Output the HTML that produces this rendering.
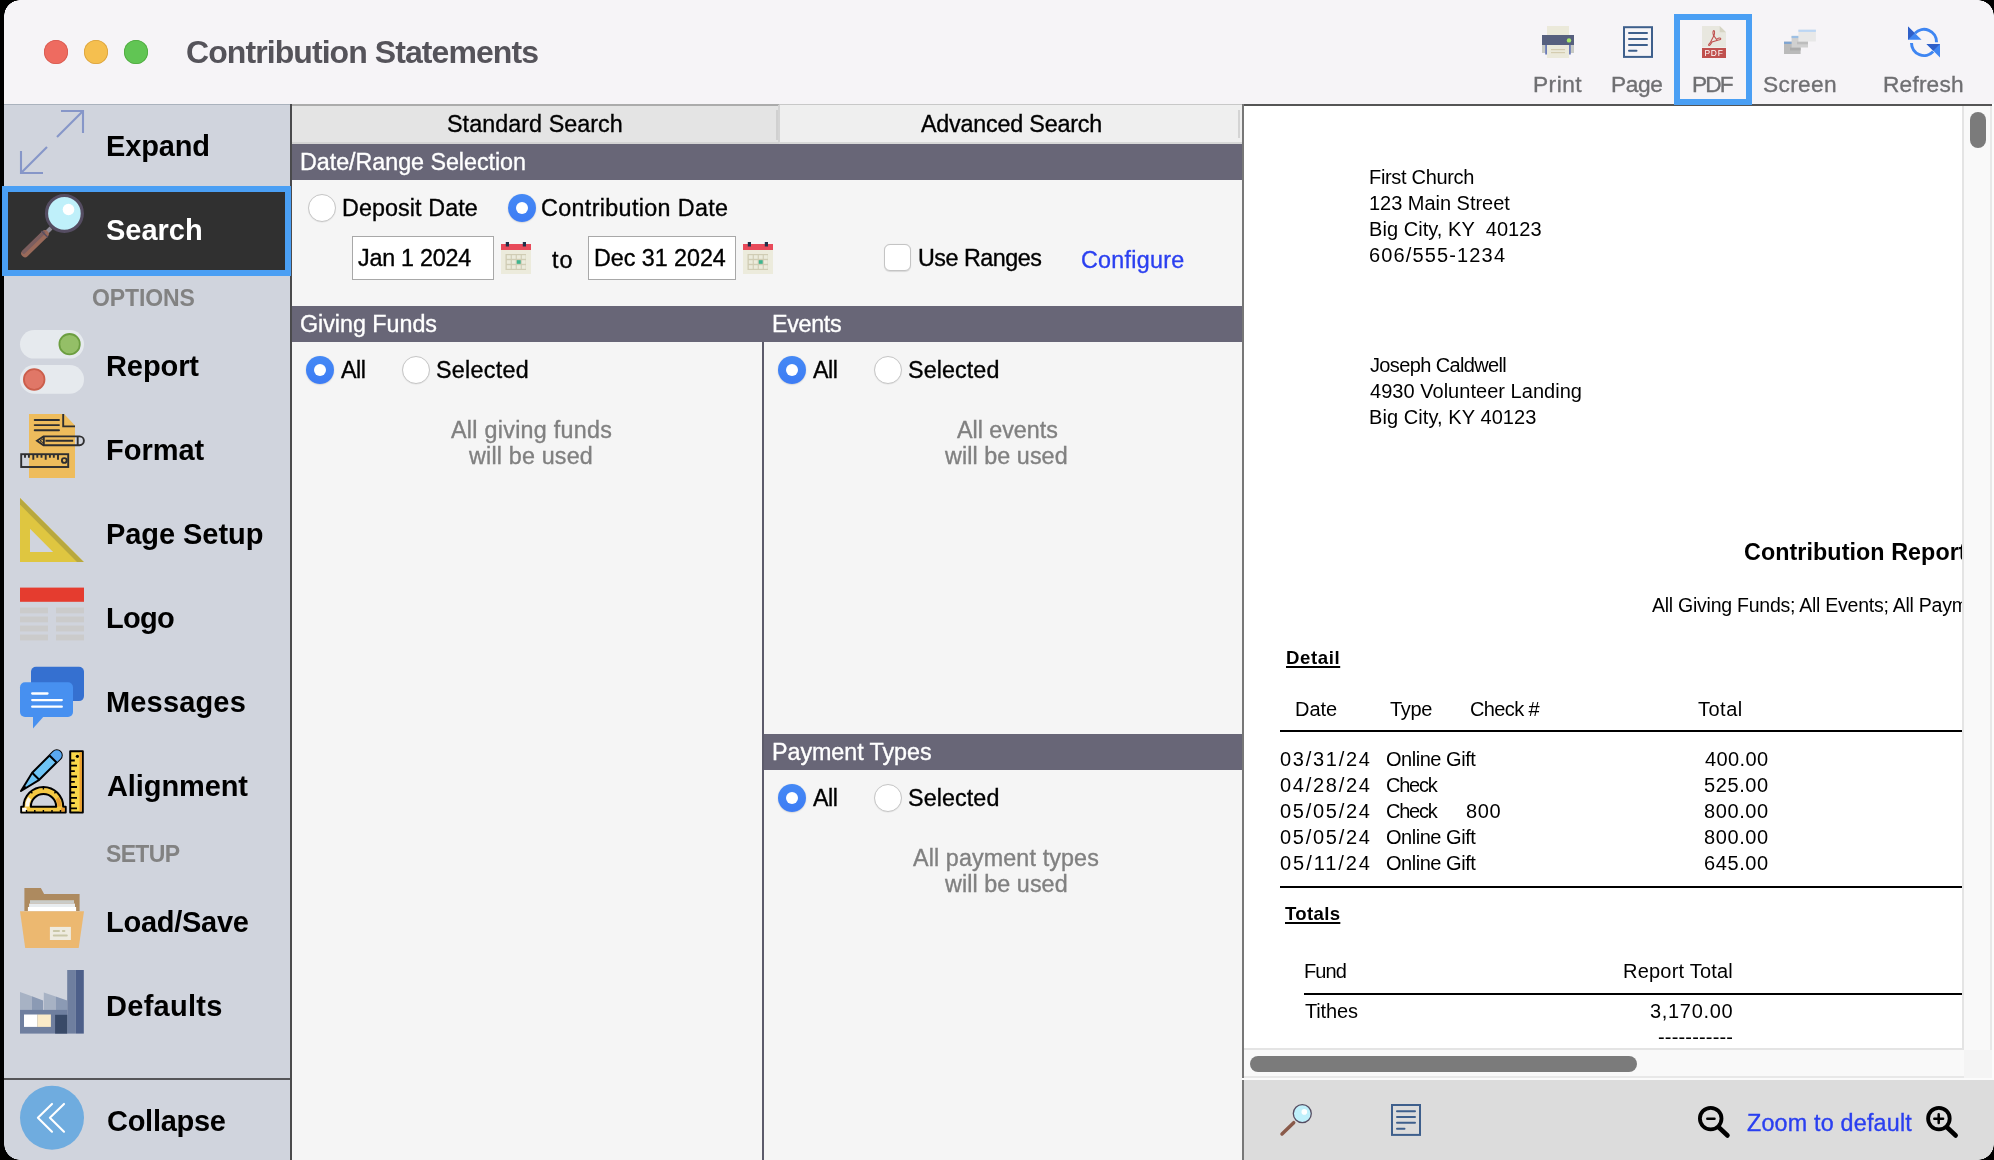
<!DOCTYPE html>
<html><head><meta charset="utf-8">
<style>
html,body{margin:0;padding:0;}
body{width:1994px;height:1160px;background:#000;overflow:hidden;position:relative;font-family:"Liberation Sans",sans-serif;}
.win{position:absolute;left:0;top:0;width:1994px;height:1160px;background:#f6f4f7;}
.cor{position:absolute;width:16px;height:16px;z-index:10;}
.a{position:absolute;}
.t{position:absolute;z-index:3;white-space:pre;line-height:1;will-change:transform;font-family:"Liberation Sans",sans-serif;}
svg{position:absolute;overflow:visible;}
.radio{position:absolute;width:28px;height:28px;border-radius:50%;box-sizing:border-box;}
.ron{background:linear-gradient(#4589f5,#3d7cf4);box-shadow:0 0.5px 1.5px rgba(0,0,0,.2);}
.ron::after{content:"";position:absolute;left:7.9px;top:7.9px;width:12.2px;height:12.2px;border-radius:50%;background:#fff;}
.roff{background:#fff;border:1px solid #c6c6c6;box-shadow:0 0.5px 1px rgba(0,0,0,.08);}
</style></head><body>
<div class="win">
<!-- title bar -->
<div class="a" style="left:0;top:0;width:1994px;height:104px;background:#f6f4f7"></div>
<!-- traffic lights -->
<div class="a" style="left:44px;top:40px;width:24px;height:24px;border-radius:50%;background:#ee6b60;box-shadow:inset 0 0 0 0.8px #d65a50"></div>
<div class="a" style="left:84px;top:40px;width:24px;height:24px;border-radius:50%;background:#f5bf4f;box-shadow:inset 0 0 0 0.8px #d9a23f"></div>
<div class="a" style="left:124px;top:40px;width:24px;height:24px;border-radius:50%;background:#61c554;box-shadow:inset 0 0 0 0.8px #4fa83f"></div>

<!-- sidebar -->
<div class="a" style="left:0;top:104px;width:290px;height:1056px;background:#d0d4dd"></div>
<div class="a" style="left:4px;top:104px;width:286px;height:1px;background:#aab2bd"></div>
<div class="a" style="left:290px;top:104px;width:2px;height:1056px;background:#4a4a4c"></div>
<!-- search highlight -->
<div class="a" style="left:0;top:0;width:4px;height:1160px;background:#000"></div>
<div class="a" style="left:2px;top:186px;width:289px;height:90px;background:#4a9ff4"></div>
<div class="a" style="left:8px;top:192px;width:277px;height:78px;background:#303030"></div>
<!-- collapse separator -->
<div class="a" style="left:4px;top:1078px;width:286px;height:2px;background:#555558"></div>

<!-- middle panel -->
<div class="a" style="left:292px;top:104px;width:950px;height:1056px;background:#f5f5f5"></div>
<!-- tabs -->
<div class="a" style="left:292px;top:104px;width:487px;height:40px;background:#e4e4e4;border-top:2px solid #ababab;box-sizing:border-box"></div>
<div class="a" style="left:292px;top:142px;width:487px;height:2px;background:#d4d4d4"></div>
<div class="a" style="left:776px;top:110px;width:2px;height:30px;background:#d0d0d0"></div>
<div class="a" style="left:779px;top:104px;width:463px;height:40px;background:#efefef;border-top:1px solid #c8c8c8;box-sizing:border-box"></div>
<div class="a" style="left:778px;top:105px;width:2px;height:38px;background:#d4d4d4"></div>
<div class="a" style="left:779px;top:142px;width:463px;height:2px;background:#d8d8d8"></div>
<div class="a" style="left:1238px;top:110px;width:2px;height:28px;background:#d4d4d4"></div>
<!-- headers -->
<div class="a" style="left:292px;top:144px;width:950px;height:36px;background:#686677"></div>
<div class="a" style="left:292px;top:306px;width:950px;height:36px;background:#686677"></div>
<div class="a" style="left:762px;top:342px;width:2px;height:818px;background:#5c5b6a"></div>
<div class="a" style="left:764px;top:734px;width:478px;height:36px;background:#686677"></div>

<!-- date inputs -->
<div class="a" style="left:352px;top:236px;width:142px;height:44px;background:#fff;border:1.5px solid #a8a8a8;box-sizing:border-box"></div>
<div class="a" style="left:588px;top:236px;width:148px;height:44px;background:#fff;border:1.5px solid #a8a8a8;box-sizing:border-box"></div>
<!-- checkbox -->
<div class="a" style="left:884px;top:244px;width:27px;height:27px;background:#fff;border:1px solid #c4c4c4;border-radius:6px;box-sizing:border-box;box-shadow:0 0.5px 1px rgba(0,0,0,.12)"></div>

<!-- radios -->
<div class="radio roff" style="left:308px;top:194px"></div>
<div class="radio ron" style="left:508px;top:194px"></div>
<div class="radio ron" style="left:306px;top:356px"></div>
<div class="radio roff" style="left:402px;top:356px"></div>
<div class="radio ron" style="left:778px;top:356px"></div>
<div class="radio roff" style="left:874px;top:356px"></div>
<div class="radio ron" style="left:778px;top:784px"></div>
<div class="radio roff" style="left:874px;top:784px"></div>

<!-- preview -->
<div class="a" style="left:1242px;top:104px;width:752px;height:974px;background:#fff"></div>
<div class="a" style="left:1242px;top:104px;width:750px;height:2px;background:#555"></div>
<div class="a" style="left:1242px;top:104px;width:2px;height:1056px;background:#777"></div>

<!-- report lines -->
<div class="a" style="left:1280px;top:729.5px;width:682px;height:2px;background:#000"></div>
<div class="a" style="left:1280px;top:885.5px;width:682px;height:2px;background:#000"></div>
<div class="a" style="left:1304px;top:993px;width:658px;height:2px;background:#000"></div>

<div class="t" style="left:186.20px;top:35.90px;font-size:32px;font-weight:700;color:#55535a;letter-spacing:-0.924px;">Contribution Statements</div>
<div class="t" style="left:1533.20px;top:72.80px;font-size:22.7px;font-weight:400;color:#6f6f72;letter-spacing:0.486px;-webkit-text-stroke:0.35px #6f6f72;">Print</div>
<div class="t" style="left:1611.40px;top:72.80px;font-size:22.7px;font-weight:400;color:#6f6f72;letter-spacing:-0.400px;-webkit-text-stroke:0.35px #6f6f72;">Page</div>
<div class="t" style="left:1692.30px;top:72.80px;font-size:22.7px;font-weight:400;color:#6f6f72;letter-spacing:-1.888px;-webkit-text-stroke:0.35px #6f6f72;">PDF</div>
<div class="t" style="left:1762.90px;top:72.80px;font-size:22.7px;font-weight:400;color:#6f6f72;letter-spacing:0.342px;-webkit-text-stroke:0.35px #6f6f72;">Screen</div>
<div class="t" style="left:1883.00px;top:72.80px;font-size:22.7px;font-weight:400;color:#6f6f72;letter-spacing:0.191px;-webkit-text-stroke:0.35px #6f6f72;">Refresh</div>
<div class="t" style="left:105.50px;top:131.50px;font-size:29px;font-weight:700;color:#000;letter-spacing:-0.150px;">Expand</div>
<div class="t" style="left:105.90px;top:215.50px;font-size:29px;font-weight:700;color:#fff;letter-spacing:-0.027px;">Search</div>
<div class="t" style="left:105.50px;top:351.50px;font-size:29px;font-weight:700;color:#000;letter-spacing:-0.091px;">Report</div>
<div class="t" style="left:105.50px;top:435.50px;font-size:29px;font-weight:700;color:#000;letter-spacing:-0.019px;">Format</div>
<div class="t" style="left:105.50px;top:519.50px;font-size:29px;font-weight:700;color:#000;letter-spacing:-0.060px;">Page Setup</div>
<div class="t" style="left:105.50px;top:603.50px;font-size:29px;font-weight:700;color:#000;letter-spacing:-0.753px;">Logo</div>
<div class="t" style="left:105.50px;top:687.50px;font-size:29px;font-weight:700;color:#000;letter-spacing:0.163px;">Messages</div>
<div class="t" style="left:106.50px;top:771.50px;font-size:29px;font-weight:700;color:#000;letter-spacing:-0.098px;">Alignment</div>
<div class="t" style="left:105.50px;top:907.50px;font-size:29px;font-weight:700;color:#000;letter-spacing:-0.258px;">Load/Save</div>
<div class="t" style="left:105.50px;top:991.50px;font-size:29px;font-weight:700;color:#000;letter-spacing:0.283px;">Defaults</div>
<div class="t" style="left:106.50px;top:1106.50px;font-size:29px;font-weight:700;color:#000;letter-spacing:-0.268px;">Collapse</div>
<div class="t" style="left:92.00px;top:286.55px;font-size:23px;font-weight:700;color:#828282;letter-spacing:-0.119px;">OPTIONS</div>
<div class="t" style="left:105.80px;top:842.55px;font-size:23px;font-weight:700;color:#828282;letter-spacing:-0.672px;">SETUP</div>
<div class="t" style="left:447.00px;top:112.50px;font-size:23.3px;font-weight:400;color:#000;letter-spacing:0.068px;-webkit-text-stroke:0.35px #000;">Standard Search</div>
<div class="t" style="left:921.00px;top:112.50px;font-size:23.3px;font-weight:400;color:#000;letter-spacing:-0.194px;-webkit-text-stroke:0.35px #000;">Advanced Search</div>
<div class="t" style="left:300.00px;top:150.50px;font-size:23.3px;font-weight:400;color:#fff;letter-spacing:-0.035px;-webkit-text-stroke:0.35px #fff;">Date/Range Selection</div>
<div class="t" style="left:341.60px;top:196.50px;font-size:23.3px;font-weight:400;color:#000;letter-spacing:0.101px;-webkit-text-stroke:0.35px #000;">Deposit Date</div>
<div class="t" style="left:541.00px;top:196.50px;font-size:23.3px;font-weight:400;color:#000;letter-spacing:0.355px;-webkit-text-stroke:0.35px #000;">Contribution Date</div>
<div class="t" style="left:358.00px;top:246.50px;font-size:23.3px;font-weight:400;color:#000;letter-spacing:-0.233px;-webkit-text-stroke:0.35px #000;">Jan 1 2024</div>
<div class="t" style="left:552.00px;top:248.50px;font-size:23.3px;font-weight:400;color:#000;letter-spacing:0.962px;-webkit-text-stroke:0.35px #000;">to</div>
<div class="t" style="left:594.00px;top:246.50px;font-size:23.3px;font-weight:400;color:#000;letter-spacing:-0.032px;-webkit-text-stroke:0.35px #000;">Dec 31 2024</div>
<div class="t" style="left:918.00px;top:246.50px;font-size:23.3px;font-weight:400;color:#000;letter-spacing:-0.489px;-webkit-text-stroke:0.35px #000;">Use Ranges</div>
<div class="t" style="left:1081.40px;top:248.50px;font-size:23.3px;font-weight:400;color:#2a3ff0;letter-spacing:0.273px;-webkit-text-stroke:0.35px #2a3ff0;">Configure</div>
<div class="t" style="left:299.60px;top:312.50px;font-size:23.3px;font-weight:400;color:#fff;letter-spacing:-0.024px;-webkit-text-stroke:0.35px #fff;">Giving Funds</div>
<div class="t" style="left:772.00px;top:312.50px;font-size:23.3px;font-weight:400;color:#fff;letter-spacing:-0.327px;-webkit-text-stroke:0.35px #fff;">Events</div>
<div class="t" style="left:341.00px;top:358.50px;font-size:23.3px;font-weight:400;color:#000;letter-spacing:-0.445px;-webkit-text-stroke:0.35px #000;">All</div>
<div class="t" style="left:435.70px;top:358.50px;font-size:23.3px;font-weight:400;color:#000;letter-spacing:0.275px;-webkit-text-stroke:0.35px #000;">Selected</div>
<div class="t" style="left:813.00px;top:358.50px;font-size:23.3px;font-weight:400;color:#000;letter-spacing:-0.445px;-webkit-text-stroke:0.35px #000;">All</div>
<div class="t" style="left:908.00px;top:358.50px;font-size:23.3px;font-weight:400;color:#000;letter-spacing:0.104px;-webkit-text-stroke:0.35px #000;">Selected</div>
<div class="t" style="left:450.50px;top:418.50px;font-size:23.3px;font-weight:400;color:#808080;letter-spacing:0.286px;-webkit-text-stroke:0.35px #808080;">All giving funds</div>
<div class="t" style="left:468.50px;top:444.50px;font-size:23.3px;font-weight:400;color:#808080;letter-spacing:0.188px;-webkit-text-stroke:0.35px #808080;">will be used</div>
<div class="t" style="left:956.60px;top:418.50px;font-size:23.3px;font-weight:400;color:#808080;letter-spacing:-0.024px;-webkit-text-stroke:0.35px #808080;">All events</div>
<div class="t" style="left:944.60px;top:444.50px;font-size:23.3px;font-weight:400;color:#808080;letter-spacing:0.079px;-webkit-text-stroke:0.35px #808080;">will be used</div>
<div class="t" style="left:771.60px;top:740.50px;font-size:23.3px;font-weight:400;color:#fff;letter-spacing:-0.046px;-webkit-text-stroke:0.35px #fff;">Payment Types</div>
<div class="t" style="left:813.00px;top:786.50px;font-size:23.3px;font-weight:400;color:#000;letter-spacing:-0.445px;-webkit-text-stroke:0.35px #000;">All</div>
<div class="t" style="left:908.00px;top:786.50px;font-size:23.3px;font-weight:400;color:#000;letter-spacing:0.104px;-webkit-text-stroke:0.35px #000;">Selected</div>
<div class="t" style="left:912.80px;top:846.50px;font-size:23.3px;font-weight:400;color:#808080;letter-spacing:0.120px;-webkit-text-stroke:0.35px #808080;">All payment types</div>
<div class="t" style="left:944.60px;top:872.50px;font-size:23.3px;font-weight:400;color:#808080;letter-spacing:0.079px;-webkit-text-stroke:0.35px #808080;">will be used</div>
<div class="t" style="left:1369.40px;top:167.05px;font-size:20px;font-weight:400;color:#000;letter-spacing:-0.319px;">First Church</div>
<div class="t" style="left:1369.40px;top:193.05px;font-size:20px;font-weight:400;color:#000;letter-spacing:-0.029px;">123 Main Street</div>
<div class="t" style="left:1369.40px;top:219.05px;font-size:20px;font-weight:400;color:#000;letter-spacing:0.056px;">Big City, KY  40123</div>
<div class="t" style="left:1369.40px;top:245.05px;font-size:20px;font-weight:400;color:#000;letter-spacing:1.141px;">606/555-1234</div>
<div class="t" style="left:1370.40px;top:355.05px;font-size:20px;font-weight:400;color:#000;letter-spacing:-0.631px;">Joseph Caldwell</div>
<div class="t" style="left:1370.40px;top:381.05px;font-size:20px;font-weight:400;color:#000;letter-spacing:0.033px;">4930 Volunteer Landing</div>
<div class="t" style="left:1369.40px;top:407.05px;font-size:20px;font-weight:400;color:#000;letter-spacing:0.081px;">Big City, KY 40123</div>
<div class="t" style="left:1743.70px;top:540.50px;font-size:23.3px;font-weight:700;color:#000;letter-spacing:0.073px;z-index:1;">Contribution Report</div>
<div class="t" style="left:1652.40px;top:595.50px;font-size:19.5px;font-weight:400;color:#000;letter-spacing:-0.249px;z-index:1;">All Giving Funds; All Events; All Payments</div>
<div class="t" style="left:1286.20px;top:648.50px;font-size:18.6px;font-weight:700;color:#000;letter-spacing:0.592px;text-decoration:underline;text-underline-offset:2px;text-decoration-thickness:2px;">Detail</div>
<div class="t" style="left:1295.20px;top:699.05px;font-size:20px;font-weight:400;color:#000;letter-spacing:-0.017px;">Date</div>
<div class="t" style="left:1390.40px;top:699.05px;font-size:20px;font-weight:400;color:#000;letter-spacing:-0.320px;">Type</div>
<div class="t" style="left:1469.60px;top:699.05px;font-size:20px;font-weight:400;color:#000;letter-spacing:-0.629px;">Check #</div>
<div class="t" style="left:1698.30px;top:699.05px;font-size:20px;font-weight:400;color:#000;letter-spacing:0.488px;">Total</div>
<div class="t" style="left:1279.80px;top:749.05px;font-size:20px;font-weight:400;color:#000;letter-spacing:1.734px;">03/31/24</div>
<div class="t" style="left:1385.60px;top:749.05px;font-size:20px;font-weight:400;color:#000;letter-spacing:-0.468px;">Online Gift</div>
<div class="t" style="left:1705.00px;top:749.05px;font-size:20px;font-weight:400;color:#000;letter-spacing:0.406px;">400.00</div>
<div class="t" style="left:1279.80px;top:775.05px;font-size:20px;font-weight:400;color:#000;letter-spacing:1.734px;">04/28/24</div>
<div class="t" style="left:1385.60px;top:775.05px;font-size:20px;font-weight:400;color:#000;letter-spacing:-1.226px;">Check</div>
<div class="t" style="left:1704.00px;top:775.05px;font-size:20px;font-weight:400;color:#000;letter-spacing:0.606px;">525.00</div>
<div class="t" style="left:1279.80px;top:801.05px;font-size:20px;font-weight:400;color:#000;letter-spacing:1.734px;">05/05/24</div>
<div class="t" style="left:1385.60px;top:801.05px;font-size:20px;font-weight:400;color:#000;letter-spacing:-1.226px;">Check</div>
<div class="t" style="left:1466.30px;top:801.05px;font-size:20px;font-weight:400;color:#000;letter-spacing:0.612px;">800</div>
<div class="t" style="left:1704.00px;top:801.05px;font-size:20px;font-weight:400;color:#000;letter-spacing:0.606px;">800.00</div>
<div class="t" style="left:1279.80px;top:827.05px;font-size:20px;font-weight:400;color:#000;letter-spacing:1.734px;">05/05/24</div>
<div class="t" style="left:1385.60px;top:827.05px;font-size:20px;font-weight:400;color:#000;letter-spacing:-0.468px;">Online Gift</div>
<div class="t" style="left:1704.00px;top:827.05px;font-size:20px;font-weight:400;color:#000;letter-spacing:0.606px;">800.00</div>
<div class="t" style="left:1279.80px;top:853.05px;font-size:20px;font-weight:400;color:#000;letter-spacing:1.946px;">05/11/24</div>
<div class="t" style="left:1385.60px;top:853.05px;font-size:20px;font-weight:400;color:#000;letter-spacing:-0.468px;">Online Gift</div>
<div class="t" style="left:1704.00px;top:853.05px;font-size:20px;font-weight:400;color:#000;letter-spacing:0.606px;">645.00</div>
<div class="t" style="left:1285.00px;top:904.50px;font-size:18.6px;font-weight:700;color:#000;letter-spacing:0.325px;text-decoration:underline;text-underline-offset:2px;text-decoration-thickness:2px;">Totals</div>
<div class="t" style="left:1303.50px;top:961.05px;font-size:20px;font-weight:400;color:#000;letter-spacing:-0.865px;">Fund</div>
<div class="t" style="left:1622.70px;top:961.05px;font-size:20px;font-weight:400;color:#000;letter-spacing:0.211px;">Report Total</div>
<div class="t" style="left:1304.50px;top:1001.05px;font-size:20px;font-weight:400;color:#000;letter-spacing:-0.147px;">Tithes</div>
<div class="t" style="left:1649.70px;top:1001.05px;font-size:20px;font-weight:400;color:#000;letter-spacing:0.677px;">3,170.00</div>
<div class="t" style="left:1658.20px;top:1027.05px;font-size:20px;font-weight:400;color:#000;letter-spacing:0.173px;">-----------</div>
<div class="t" style="left:1746.60px;top:1111.50px;font-size:23.3px;font-weight:400;color:#2a3ff0;letter-spacing:0.209px;-webkit-text-stroke:0.35px #2a3ff0;">Zoom to default</div>

<!-- scrollbars --><div style="position:absolute;left:0;top:0;z-index:2">
<div class="a" style="left:1962px;top:106px;width:30px;height:944px;background:#f9f9f9;border-left:2px solid #e4e4e4;border-right:2px solid #e8e8e8;box-sizing:border-box"></div>
<div class="a" style="left:1992px;top:106px;width:2px;height:974px;background:#fbfbfb"></div>
<div class="a" style="left:1969.5px;top:112px;width:16px;height:36px;border-radius:8px;background:#7b7b7b"></div>
<div class="a" style="left:1244px;top:1048px;width:720px;height:2px;background:#e4e4e4"></div>
<div class="a" style="left:1244px;top:1050px;width:720px;height:28px;background:#f9f9f9;border-bottom:2px solid #e8e8e8;box-sizing:border-box"></div>
<div class="a" style="left:1964px;top:1050px;width:28px;height:28px;background:#f4f4f4"></div>
<div class="a" style="left:1242px;top:1078px;width:752px;height:2px;background:#fbfbfb"></div>
<div class="a" style="left:1250px;top:1056px;width:387px;height:16px;border-radius:8px;background:#7b7b7b"></div>
<!-- bottom toolbar -->
<div class="a" style="left:1244px;top:1080px;width:750px;height:80px;background:#dcdcdc"></div>

</div>
<svg style="left:0;top:0;z-index:5" width="1994" height="1160" viewBox="0 0 1994 1160">
<defs>
<filter id="blur1" x="-20%" y="-20%" width="140%" height="140%"><feGaussianBlur stdDeviation="0.75"/></filter>
</defs>
<!-- ===== toolbar ===== -->
<!-- Print -->
<g>
<rect x="1547" y="26" width="22" height="10" fill="#ebe9da"/>
<rect x="1542" y="35" width="32" height="10" fill="#565f7e"/>
<circle cx="1569" cy="40.4" r="2.2" fill="#a8e86a"/>
<rect x="1542" y="45" width="32" height="8" fill="#c8cac4"/>
<rect x="1545.2" y="45" width="1.8" height="9.5" fill="#6a7ab8"/>
<rect x="1569" y="45" width="1.8" height="9.5" fill="#6a7ab8"/>
<rect x="1547" y="45" width="22" height="13" fill="#ebe9da"/>
<rect x="1551" y="49" width="14" height="1.2" fill="#d4ccb0"/>
<rect x="1551" y="52" width="14" height="1.2" fill="#d4ccb0"/>
</g>
<!-- Page -->
<g fill="none" stroke="#3e5f8c">
<rect x="1624" y="27.2" width="28" height="29.7" stroke-width="2"/>
<path d="M1629 33H1647M1629 39H1647M1629 45H1647M1629 50.8H1636.5" stroke-width="2" stroke-linecap="round"/>
</g>
<!-- PDF selection box -->
<rect x="1677" y="17" width="72" height="85" fill="none" stroke="#4a9ff4" stroke-width="6"/>
<!-- PDF icon -->
<g>
<path d="M1702 26.1H1719.7L1726 32.3V47.5H1702Z" fill="#e8e7df"/>
<path d="M1719.7 26.1V32.3H1726Z" fill="#d6d4c4"/>
<rect x="1702" y="48" width="24" height="10" fill="#c0504e"/>
<text x="1714" y="56.2" font-family="Liberation Sans" font-weight="400" font-size="8.4" fill="#fff" text-anchor="middle" letter-spacing="0.8">PDF</text>
<path d="M1713.8 30.6C1712.6 31 1713 34 1713.6 36.2L1710.5 42.3C1709.5 43.8 1708 44.5 1708.7 45.3C1709.6 46 1711 44 1712 42L1718.5 40C1720.5 39.8 1721.3 39 1720.5 38.3C1719.5 37.6 1717.5 38.7 1716.5 39.4L1714 36C1714.5 34 1714.9 30.9 1713.8 30.6Z" fill="none" stroke="#c0504e" stroke-width="1.1"/>
</g>
<!-- Screen icon -->
<g filter="url(#blur1)">
<rect x="1784" y="41.7" width="16.6" height="12.3" fill="#bababa"/>
<rect x="1784" y="41.7" width="16.6" height="2.2" fill="#7ea4d2"/>
<rect x="1790" y="47.5" width="10.6" height="3" fill="#ababab"/>
<rect x="1791.6" y="35.9" width="16.4" height="11.6" fill="#d0d0d0"/>
<rect x="1791.6" y="35.9" width="16.4" height="2.2" fill="#9cbfe4"/>
<rect x="1797" y="41.7" width="11" height="2.6" fill="#bdbdbd"/>
<rect x="1798.4" y="29.7" width="17.5" height="11.8" fill="#e8e8e8"/>
<rect x="1798.4" y="29.7" width="17.5" height="2.2" fill="#bcd6f4"/>
</g>
<!-- Refresh -->
<g>
<path d="M1915 33.2A12.5 12.5 0 0 1 1936.5 42.2" fill="none" stroke="#3f86f2" stroke-width="3"/>
<path d="M1911.5 43A12.5 12.5 0 0 0 1933.2 51.5" fill="none" stroke="#3f86f2" stroke-width="3"/>
<path d="M1908 26.6V39.8H1921.6Z" fill="#3f86f2"/>
<path d="M1908 26.6V39.8L1914.8 33.2Z" fill="#2f5fc8"/>
<path d="M1940 57.5V44H1926.5Z" fill="#3f86f2"/>
<path d="M1940 44H1926.5L1933.25 50.75Z" fill="#2f5fc8"/>
</g>

<!-- ===== sidebar ===== -->
<!-- Expand -->
<g fill="none" stroke="#8696c8" stroke-width="2.1" stroke-linejoin="miter">
<path d="M61 111H83V133"/><path d="M83 111L57 137"/>
<path d="M21 151V173H43"/><path d="M21 173L47 147"/>
</g>
<!-- Search magnifier -->
<g>
<line x1="51" y1="228" x2="46" y2="233" stroke="#8e8a96" stroke-width="4"/>
<line x1="45" y1="234" x2="25" y2="253.5" stroke="#9a6a5a" stroke-width="7.5" stroke-linecap="round"/>
<line x1="43.6" y1="232.6" x2="23.6" y2="252.1" stroke="#7b5e5f" stroke-width="3.6" stroke-linecap="round"/>
<line x1="41.5" y1="231" x2="47.8" y2="237.3" stroke="#5a5060" stroke-width="1.6"/>
<circle cx="64.4" cy="213.4" r="17.9" fill="#bff0fa" stroke="#554d62" stroke-width="3.2"/>
<circle cx="68.5" cy="209.5" r="5.8" fill="#fff"/>
</g>
<!-- Report toggles -->
<g>
<rect x="20" y="330" width="64" height="28.6" rx="14.3" fill="#e6eaee"/>
<circle cx="69.6" cy="344.2" r="10.2" fill="#94bf67" stroke="#6c9e40" stroke-width="1.8"/>
<rect x="20" y="365" width="64" height="28.8" rx="14.4" fill="#e6eaee"/>
<circle cx="34.2" cy="379.5" r="10.3" fill="#e07767" stroke="#cb5e4b" stroke-width="1.8"/>
</g>
<!-- Format -->
<g>
<path d="M29 414H64.1L75 425.5V478H29Z" fill="#eebc5c"/>
<g fill="none" stroke="#2e2e30" stroke-width="1.9">
<path d="M63.2 414V426.4H75"/>
<path d="M34.7 420H59M34.7 425.1H59M34.7 430.3H59" stroke-linecap="round"/>
<path d="M37 440.8L43.5 436.4H79.5A4.4 4.4 0 0 1 79.5 445.2H43.5Z"/>
<path d="M43.8 436.6V445M77.7 436.6V445M45.5 440.8H73.2"/>
<path d="M40 440.8L43.6 438.6V443Z" stroke-width="1"/>
<rect x="21.2" y="454.2" width="47" height="12.8"/>
<path d="M25 454V457.8M28.9 454V457.8M33.3 454V459.7M37.3 454V457.8M41.5 454V457.8M45.7 454V459.7M49.9 454V457.8M53.8 454V457.8M58 454V459.7"/>
<circle cx="64.3" cy="460.5" r="2.4"/>
</g>
</g>
<!-- Page setup -->
<g>
<path d="M20 498L83.8 562H20ZM30 528.8V552H53.1Z" fill="#dfc640" fill-rule="evenodd"/>
<path d="M20 498L83.8 562H77L20 504.6Z" fill="#b8a83e"/>
</g>
<!-- Logo -->
<g>
<rect x="20" y="587.6" width="64" height="14.2" fill="#e53c2f"/>
<g fill="#cbcbcb">
<rect x="20" y="607.5" width="28" height="5.8"/><rect x="56" y="607.5" width="28" height="5.8"/>
<rect x="20" y="616.5" width="28" height="5.8"/><rect x="56" y="616.5" width="28" height="5.8"/>
<rect x="20" y="625.6" width="28" height="5.8"/><rect x="56" y="625.6" width="28" height="5.8"/>
<rect x="20" y="634.6" width="28" height="5.8"/><rect x="56" y="634.6" width="28" height="5.8"/>
</g>
</g>
<!-- Messages -->
<g>
<rect x="31" y="666.8" width="53" height="34.3" rx="5" fill="#3570d0"/>
<rect x="20" y="682.2" width="53" height="34.8" rx="5" fill="#4790f0"/>
<path d="M33 716V728.6L44.1 716Z" fill="#4790f0"/>
<path d="M32.2 693.5H47.5M32.2 700.1H61.8M32.2 706.7H61.8" stroke="#fff" stroke-width="2.3" stroke-linecap="round"/>
</g>
<!-- Alignment -->
<g stroke="#000" stroke-width="2" stroke-linejoin="round">
<!-- ruler -->
<rect x="70.2" y="751.2" width="12.6" height="61.3" fill="#f8d84a"/>
<rect x="79.5" y="752.2" width="2.3" height="59.3" fill="#eea030" stroke="none"/>
<circle cx="77.4" cy="756.3" r="1.6" fill="#000" stroke="none"/>
<path d="M70 760.5H74.8M70 765.7H77M70 771.2H74.8M70 776.5H77M70 781.8H74.8M70 787H77M70 792.5H74.8M70 797.9H77M70 803.2H74.8M70 808.3H77" fill="none" stroke-width="1.8"/>
<!-- protractor -->
<path d="M21.2 806.8H23.6A19.8 19.8 0 0 1 63.2 806.8H65.7V812.5H21.2Z M30.8 806.8H56.2A12.7 12.7 0 0 0 30.8 806.8Z" fill="#f5c842" fill-rule="evenodd"/>
<path d="M22.2 807.8H26.5V811.5H22.2Z" fill="#fff" stroke="none"/>
<path d="M61 807.8H64.7V811.5H61Z" fill="#e89a30" stroke="none"/>
<path d="M25.3 806.5A18 18 0 0 1 28 797L31 799.2A14.5 14.5 0 0 0 29.2 806.5Z" fill="#fff" stroke="none" opacity="0.9"/>
<path d="M61.5 806.5A18 18 0 0 0 58.8 797L55.8 799.2A14.5 14.5 0 0 1 57.6 806.5Z" fill="#e89a30" stroke="none" opacity="0.9"/>
<path d="M43.4 787.2V789.5M31 791.5L32.3 793.3M55.8 791.5L54.5 793.3M26.5 812V810M34.8 812V810M43.4 812V810M52 812V810M60.5 812V810" fill="none" stroke-width="1.4"/>
<!-- pencil -->
<g transform="translate(21 791) rotate(-45)">
<path d="M0 0L20.8 -5 H50.6 A5 5 0 0 1 50.6 5 H20.8 Z" fill="#6ec4f5"/>
<path d="M45.3 -5 H50.6 A5 5 0 0 1 50.6 5 H45.3 Z" fill="#5aa8f0" stroke="none"/>
<path d="M20.8 -5V5M45.3 -5V5" fill="none"/>
<path d="M0.5 0L6.5 -1.6V1.6Z" fill="#000" stroke="none"/>
</g>
</g>
<!-- Load/Save folder -->
<g>
<path d="M24.4 911V888.1H40.9L44.1 893.9H79.6V911Z" fill="#ad8a5f"/>
<rect x="30" y="900.2" width="44" height="3.4" fill="#c9cbc8"/>
<rect x="29.1" y="903.6" width="45.9" height="3.4" fill="#e8ecef"/>
<rect x="27.9" y="907" width="48.2" height="4.2" fill="#ffffff"/>
<path d="M20 911.2H84L78.7 947.9H25.2Z" fill="#ecb870"/>
<rect x="49.9" y="926.9" width="21" height="13.1" fill="#eeebe0"/>
<path d="M53.8 931.1H59M62.9 931.1H64.4M53.8 935.6H66.8" stroke="#c9c7a8" stroke-width="2" stroke-linecap="round"/>
</g>
<!-- Defaults factory -->
<g>
<rect x="67.2" y="970" width="8.7" height="63.6" fill="#6f7f9f"/>
<rect x="75.9" y="970" width="7.9" height="63.6" fill="#4d5f89"/>
<path d="M20 992.1L31.9 996.3V1010H20Z" fill="#a7b2c4"/>
<path d="M31.9 996.3L43.1 1000.6V1010H31.9Z" fill="#8b9ab4"/>
<path d="M43.8 992.4L55.7 996.5V1010H43.8Z" fill="#a7b2c4"/>
<path d="M55.7 996.5L67.2 1000.6V1010H55.7Z" fill="#8b9ab4"/>
<rect x="20" y="1009.9" width="47.2" height="23.7" fill="#6f7f9f"/>
<rect x="24" y="1014.5" width="13.3" height="12.4" fill="#ffffff"/>
<rect x="37.3" y="1014.5" width="13.6" height="12.4" fill="#fbebc8"/>
<rect x="55.1" y="1014.8" width="12.1" height="18.8" fill="#394a68"/>
</g>
<!-- Collapse -->
<g>
<circle cx="52" cy="1117.8" r="32" fill="#6facdf"/>
<path d="M52 1103.9L37.9 1117.8L52 1131.7M64 1103.9L49.9 1117.8L64 1131.7" fill="none" stroke="#fff" stroke-width="2.1" stroke-linecap="round" stroke-linejoin="round"/>
</g>

<!-- ===== calendars ===== -->
<g id="cal1">
<rect x="501" y="250" width="30" height="24" fill="#ecebdc"/>
<rect x="501" y="244" width="30" height="6" fill="#e84a5a"/>
<rect x="505.8" y="242" width="3.2" height="4.5" fill="#1f3048"/>
<rect x="522.8" y="242" width="3.2" height="4.5" fill="#1f3048"/>
<rect x="505.5" y="254" width="20.5" height="16" fill="#d0ccb4"/>
<g fill="#ecebdc">
<rect x="506.8" y="255.2" width="3.9" height="3.6"/><rect x="511.8" y="255.2" width="3.9" height="3.6"/><rect x="516.8" y="255.2" width="3.9" height="3.6"/><rect x="521.8" y="255.2" width="3.9" height="3.6"/>
<rect x="506.8" y="260.2" width="3.9" height="3.6"/><rect x="511.8" y="260.2" width="3.9" height="3.6"/><rect x="521.8" y="260.2" width="3.9" height="3.6"/>
<rect x="506.8" y="265.2" width="3.9" height="3.6"/><rect x="511.8" y="265.2" width="3.9" height="3.6"/><rect x="516.8" y="265.2" width="3.9" height="3.6"/><rect x="521.8" y="265.2" width="3.9" height="3.6"/>
</g>
<rect x="516.8" y="260.2" width="3.9" height="3.6" fill="#3fb58f"/>
</g>
<use href="#cal1" x="242" y="0"/>

<!-- ===== bottom toolbar ===== -->
<g>
<line x1="1293.7" y1="1122.7" x2="1282" y2="1134" stroke="#8a5a4a" stroke-width="3.5" stroke-linecap="round"/>
<circle cx="1302.3" cy="1113.6" r="9" fill="#c0f0fb" stroke="#554d62" stroke-width="1.3"/>
<circle cx="1304.3" cy="1111.9" r="2.8" fill="#fff"/>
</g>
<g fill="none" stroke="#3e5f8c">
<rect x="1392" y="1105" width="28" height="29.9" stroke-width="2"/>
<path d="M1397 1111.2H1415M1397 1117H1415M1397 1122.8H1415M1397 1128.7H1404.5" stroke-width="2" stroke-linecap="round"/>
</g>
<g fill="none" stroke="#000">
<circle cx="1710.7" cy="1118.6" r="10.8" stroke-width="3.8"/>
<path d="M1707.3 1118.7H1714.5" stroke-width="2.5" stroke-linecap="round"/>
<path d="M1719 1127.5L1727.5 1135.5" stroke-width="4.5" stroke-linecap="round"/>
<circle cx="1938.9" cy="1118.6" r="10.8" stroke-width="3.8"/>
<path d="M1934.3 1118.7H1943.1M1938.7 1114.3V1123.1" stroke-width="2.5" stroke-linecap="round"/>
<path d="M1947.2 1127.5L1955.7 1135.5" stroke-width="4.5" stroke-linecap="round"/>
</g>
</svg>

</div>
<div class="cor" style="left:4px;top:0;background:radial-gradient(circle at 100% 100%,transparent 15.5px,#000 16px)"></div>
<div class="cor" style="left:1978px;top:0;background:radial-gradient(circle at 0 100%,transparent 15.5px,#000 16px)"></div>
<div class="cor" style="left:4px;top:1144px;background:radial-gradient(circle at 100% 0,transparent 15.5px,#000 16px)"></div>
<div class="cor" style="left:1978px;top:1144px;background:radial-gradient(circle at 0 0,transparent 15.5px,#000 16px)"></div>
</body></html>
